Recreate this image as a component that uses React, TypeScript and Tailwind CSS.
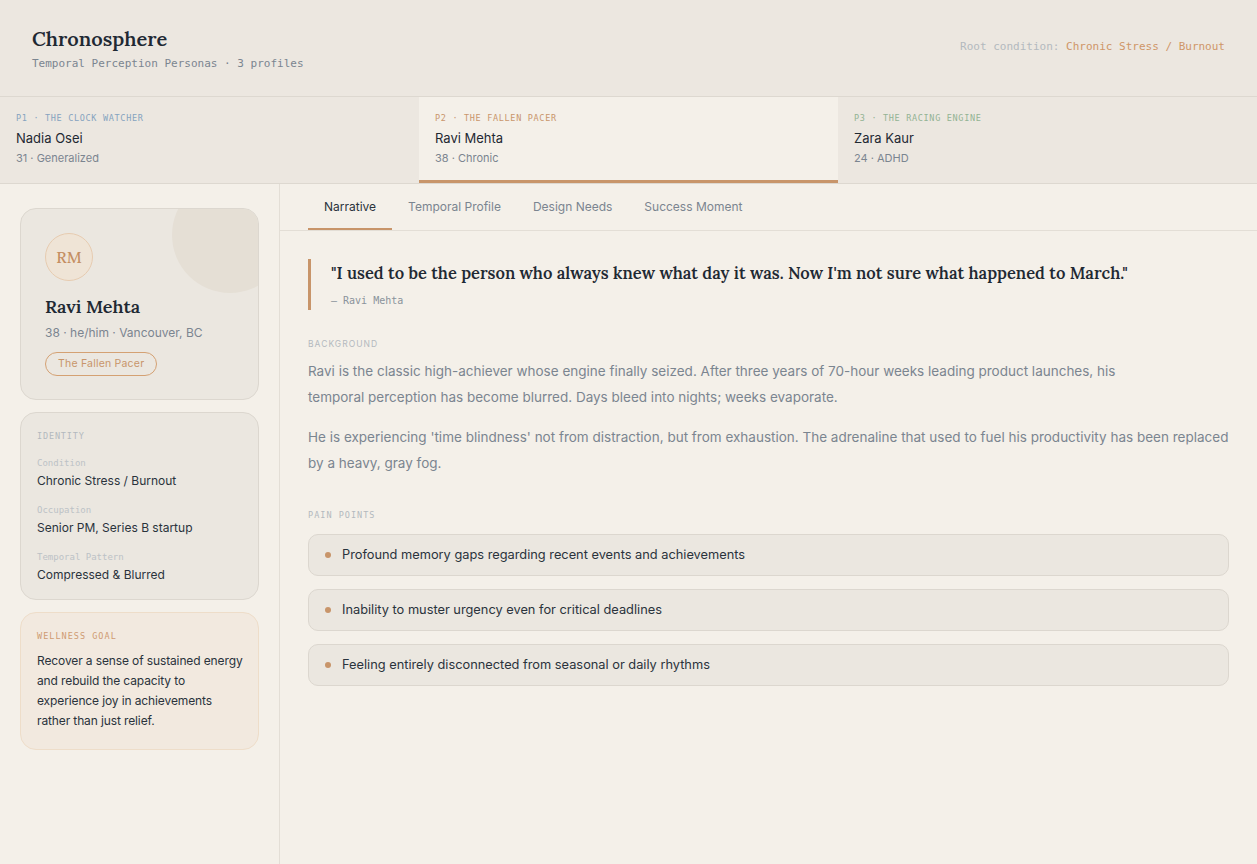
import React from "react";

const serif = "font-['Lora','Liberation_Serif',serif]";
const mono = "font-['DejaVu_Sans_Mono','Liberation_Mono',monospace]";

const personas = [
  { tag: "P1 · The Clock Watcher", name: "Nadia Osei", meta: "31 · Generalized", color: "text-[#86a3bf]", active: false },
  { tag: "P2 · The Fallen Pacer", name: "Ravi Mehta", meta: "38 · Chronic", color: "text-[#c9966c]", active: true },
  { tag: "P3 · The Racing Engine", name: "Zara Kaur", meta: "24 · ADHD", color: "text-[#93b394]", active: false },
];

const tabs = ["Narrative", "Temporal Profile", "Design Needs", "Success Moment"];

const identity = [
  { label: "Condition", value: "Chronic Stress / Burnout" },
  { label: "Occupation", value: "Senior PM, Series B startup" },
  { label: "Temporal Pattern", value: "Compressed & Blurred" },
];

const painPoints = [
  "Profound memory gaps regarding recent events and achievements",
  "Inability to muster urgency even for critical deadlines",
  "Feeling entirely disconnected from seasonal or daily rhythms",
];

const App = () => {
  return (
    <div className="min-h-[864px] bg-[#f4f0e9] text-[#1f2933] font-['Inter','Liberation_Sans',sans-serif] flex flex-col">
      {/* header */}
      <div className="h-[97px] bg-[#ece7e0] border-b border-[#ddd8d0] flex justify-between items-center px-8">
        <div className="mt-[2px]">
          <h1 className={`${serif} text-[20px] font-semibold leading-7 text-[#1f2933]`}>Chronosphere</h1>
          <p className={`${mono} text-[11px] text-[#7b8590] mt-[3px]`}>Temporal Perception Personas · 3 profiles</p>
        </div>
        <div className={`${mono} text-[11px] -mt-[1px]`}>
          <span className="text-[#b3b9be]">Root condition: </span>
          <span className="text-[#cf9668]">Chronic Stress / Burnout</span>
        </div>
      </div>

      {/* persona switcher */}
      <div className="grid grid-cols-3 border-b border-[#ddd8d0]">
        {personas.map((p) => (
          <div
            key={p.name}
            className={`h-[86px] px-4 pt-[15px] ${p.active ? "bg-[#f4f0e9] border-b-[3px] border-[#c8956a]" : "bg-[#ece7e0]"}`}
          >
            <div className={`${mono} text-[8.5px] leading-3 uppercase tracking-[0.08em] ${p.color}`}>{p.tag}</div>
            <div className="text-[13px] leading-4 mt-[6px] text-[#1f2933]">{p.name}</div>
            <div className="text-[11px] leading-4 text-[#7b8590] mt-[4px]">{p.meta}</div>
          </div>
        ))}
      </div>

      <div className="flex flex-1">
        {/* sidebar */}
        <div className="w-[280px] shrink-0 border-r border-[#e3ded6] px-5 pt-6 flex flex-col gap-[12px]">
          <div className="relative overflow-hidden rounded-2xl border border-[#dcd7cf] bg-[#ebe7e0] px-6 pt-6 pb-6 h-[192px]">
            <div className="absolute -right-[30px] -top-[32px] w-[116px] h-[116px] rounded-full bg-[#e5dfd5]" />
            <div className={`relative w-[48px] h-[48px] rounded-full border border-[#e6cbb0] bg-[#efe4d6] flex items-center justify-center ${serif} text-[16px] font-medium text-[#c48e62]`}>
              RM
            </div>
            <div className={`relative ${serif} text-[18px] font-semibold mt-[14px] leading-6`}>Ravi Mehta</div>
            <div className="relative text-[12px] leading-4 text-[#7b8590] mt-[6px]">38 · he/him · Vancouver, BC</div>
            <div className="relative inline-block mt-[11px] rounded-full border border-[#d4a173] px-3 py-[3px] text-[10.5px] tracking-[0.02em] text-[#c8956a]">
              The Fallen Pacer
            </div>
          </div>

          <div className="rounded-2xl border border-[#dcd7cf] bg-[#ebe7e0] px-4 pt-[17px] pb-[16px]">
            <div className={`${mono} text-[8.5px] leading-3 uppercase tracking-[0.1em] text-[#b3b9be]`}>Identity</div>
            <div className="flex flex-col gap-[15px] mt-[15px]">
              {identity.map((r) => (
                <div key={r.label}>
                  <div className={`${mono} text-[9px] leading-3 text-[#bcc2c6]`}>{r.label}</div>
                  <div className="text-[12px] leading-4 text-[#2a333c] mt-[4px]">{r.value}</div>
                </div>
              ))}
            </div>
          </div>

          <div className="rounded-2xl border border-[#eeddc9] bg-[#f2e9df] pl-4 pr-2 pt-[17px] pb-[18px]">
            <div className={`${mono} text-[8.5px] leading-3 uppercase tracking-[0.12em] text-[#cf9b72]`}>Wellness Goal</div>
            <p className="max-w-[206px] text-[12px] leading-[20px] tracking-[-0.01em] text-[#2a333c] mt-[9px]">
              Recover a sense of sustained energy and rebuild the capacity to experience joy in achievements rather than just relief.
            </p>
          </div>
        </div>

        {/* main */}
        <div className="flex-1">
          <div className="flex border-b border-[#e3ded6] px-7 h-[47px]">
            {tabs.map((t, i) => (
              <div
                key={t}
                className={`px-4 pt-[2px] flex items-center text-[12px] ${i === 0 ? "text-[#2a333c] border-b-2 border-[#c8956a]" : "text-[#7b8590] border-b-2 border-transparent"}`}
              >
                {t}
              </div>
            ))}
          </div>

          <div className="px-7 pt-7">
            <div className="border-l-[3px] border-[#c8956a] pl-[20px] pt-[2px] pb-[1px]">
              <p className={`${serif} text-[16.5px] font-semibold leading-6 text-[#1f2933]`}>
                "I used to be the person who always knew what day it was. Now I'm not sure what happened to March."
              </p>
              <p className={`${mono} text-[10px] leading-4 text-[#8a939b] mt-[8px]`}>— Ravi Mehta</p>
            </div>

            <div className="text-[8.5px] leading-3 uppercase tracking-[0.12em] text-[#b3b9be] mt-[28px]">Background</div>
            <p className="text-[13.5px] leading-[26px] text-[#7b8590] mt-[8px] max-w-[812px]">
              Ravi is the classic high-achiever whose engine finally seized. After three years of 70-hour weeks leading product launches, his temporal perception has become blurred. Days bleed into nights; weeks evaporate.
            </p>
            <p className="text-[13.5px] leading-[26px] text-[#7b8590] mt-[14px]">
              He is experiencing 'time blindness' not from distraction, but from exhaustion. The adrenaline that used to fuel his productivity has been replaced by a heavy, gray fog.
            </p>

            <div className={`${mono} text-[8.5px] leading-3 uppercase tracking-[0.12em] text-[#b3b9be] mt-[33px]`}>Pain Points</div>
            <div className="flex flex-col gap-[13px] mt-[13px]">
              {painPoints.map((pt) => (
                <div key={pt} className="h-[42px] rounded-[10px] border border-[#dcd7cf] bg-[#ebe7e0] flex items-center px-4 gap-[11px]">
                  <span className="w-[6px] h-[6px] rounded-full bg-[#c8956a] shrink-0" />
                  <span className="text-[12.8px] text-[#2a333c]">{pt}</span>
                </div>
              ))}
            </div>
          </div>
        </div>
      </div>
    </div>
  );
};

export default App;
